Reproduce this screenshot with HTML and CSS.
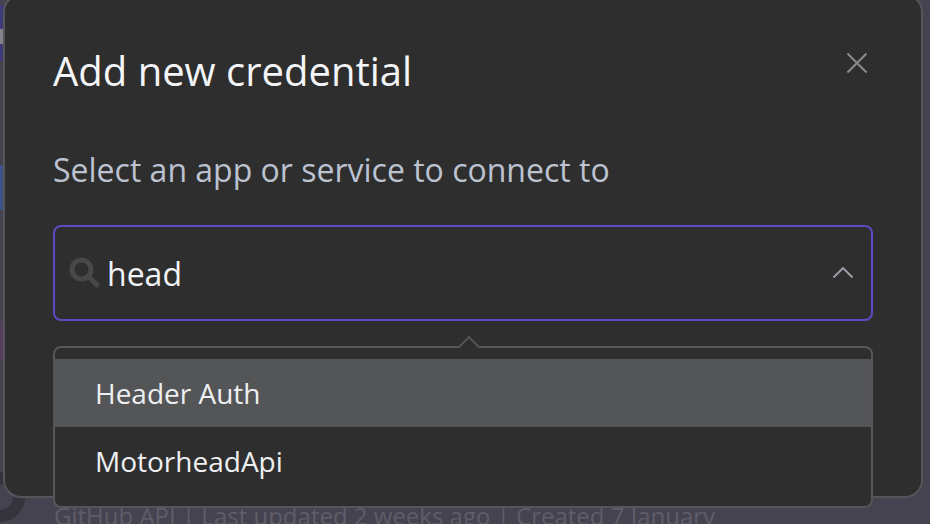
FILE: index.html
```html
<!DOCTYPE html>
<html lang="en">
<head>
    <meta charset="UTF-8">
    <meta name="viewport" content="width=device-width, initial-scale=1.0">
    <title>Add new credential</title>
    <link rel="stylesheet" href="styles.css">
</head>
<body>
    <!-- page behind the dialog -->
    <div class="backdrop">
        <span class="blip blip-indigo"></span>
        <span class="blip blip-grey"></span>
        <span class="blip blip-blue"></span>
        <span class="blip blip-pink"></span>
        <span class="ring"></span>
        <p class="behind-text">GitHub API | Last updated 2 weeks ago | Created 7 January</p>
    </div>

    <div class="modal">
        <div class="modal-header">
            <h1>Add new credential</h1>
            <svg class="close-icon" width="20" height="20" viewBox="0 0 20 20" aria-label="Close">
                <path d="M0.5 0.5 L19.5 19.5 M19.5 0.5 L0.5 19.5"/>
            </svg>
        </div>

        <label class="field-label">Select an app or service to connect to</label>

        <div class="select-box">
            <svg class="search-icon" width="32" height="32" viewBox="0 0 32 32">
                <circle cx="12.5" cy="12.5" r="9.5"/>
                <path d="M19.5 19.5 L28 28"/>
            </svg>
            <span class="select-value">head</span>
            <svg class="chevron-icon" width="20" height="11" viewBox="0 0 20 11">
                <path d="M0.5 10.5 L10 1 L19.5 10.5"/>
            </svg>
        </div>
    </div>

    <div class="dropdown">
        <span class="dropdown-arrow"></span>
        <ul class="option-list">
            <li class="option option-active">Header Auth</li>
            <li class="option">MotorheadApi</li>
        </ul>
    </div>
</body>
</html>
```

FILE: styles.css
```css
* {
    box-sizing: border-box;
}

html, body {
    height: 100%;
}

body {
    margin: 0;
    height: 524px;
    overflow: hidden;
    position: relative;
    font-family: "Open Sans", "Noto Sans", sans-serif;
    background-color: #45434f;
}

.backdrop {
    position: absolute;
    inset: 0;
    overflow: hidden;
}

.blip {
    position: absolute;
    left: 0;
    width: 4px;
}

.blip-indigo {
    top: 5px;
    height: 56px;
    background-color: #3d3b78;
}

.blip-grey {
    top: 29px;
    height: 15px;
    background-color: #85848c;
}

.blip-blue {
    top: 165px;
    height: 45px;
    background-color: #3c5488;
}

.blip-pink {
    top: 322px;
    height: 38px;
    background-color: #55405f;
}

.ring {
    position: absolute;
    left: -25px;
    top: 472px;
    width: 50px;
    height: 50px;
    border: 12px solid #35343d;
    border-radius: 50%;
}

.behind-text {
    position: absolute;
    left: 54px;
    top: 499px;
    margin: 0;
    font-size: 24px;
    line-height: 33px;
    white-space: nowrap;
    color: #5e5d69;
}

.modal {
    position: absolute;
    left: 3px;
    top: -6px;
    width: 920px;
    height: 504px;
    padding: 48px 48px 0 48px;
    background-color: #2e2e2e;
    border: 2px solid #55555a;
    border-radius: 18px;
}

.modal-header {
    display: flex;
    justify-content: space-between;
    align-items: flex-start;
}

h1 {
    margin: 0;
    font-size: 40px;
    line-height: 54px;
    font-weight: 400;
    color: #f4f5f8;
}

.close-icon {
    margin: 9px 6px 0 0;
    stroke: #8b8b8b;
    stroke-width: 2;
    fill: none;
}

.field-label {
    display: block;
    margin-top: 50px;
    font-size: 32px;
    line-height: 44px;
    color: #bcc2d0;
}

.select-box {
    display: flex;
    align-items: center;
    height: 96px;
    margin-top: 33px;
    padding: 0 18px 0 14px;
    border: 2px solid #5a4cc2;
    border-radius: 8px;
}

.search-icon {
    flex: none;
    fill: none;
    stroke: #48484a;
    stroke-width: 5;
    stroke-linecap: round;
}

.select-value {
    flex: 1;
    margin-left: 6px;
    font-size: 32px;
    color: #f2f3f6;
}

.chevron-icon {
    flex: none;
    margin-top: -1px;
    fill: none;
    stroke: #9a9ba4;
    stroke-width: 2;
}

.dropdown {
    position: absolute;
    left: 53px;
    top: 346px;
    width: 820px;
    height: 162px;
    padding-top: 11px;
    background-color: #2e2e2e;
    border: 2px solid #55555a;
    border-radius: 8px;
}

.dropdown-arrow {
    position: absolute;
    left: 406px;
    top: -9px;
    width: 16px;
    height: 16px;
    background-color: #2e2e2e;
    border-top: 2px solid #55555a;
    border-left: 2px solid #55555a;
    transform: rotate(45deg);
}

.option-list {
    list-style: none;
    margin: 0;
    padding: 0;
}

.option {
    height: 68px;
    padding-left: 40px;
    font-size: 28px;
    line-height: 68px;
    color: #eeeff2;
}

.option-active {
    background-color: #545557;
}
```
